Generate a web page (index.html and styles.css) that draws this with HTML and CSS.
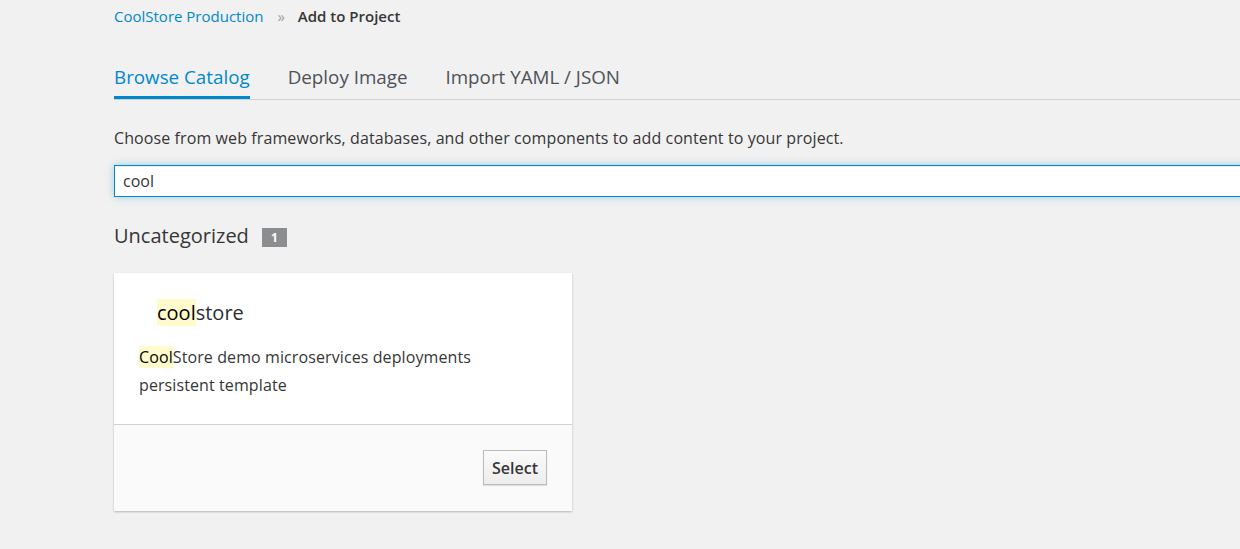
FILE: index.html
```html
<!DOCTYPE html>
<html>
<head>
<meta charset="utf-8">
<link rel="stylesheet" href="styles.css">
</head>
<body>
<div class="page">
  <div class="main">
    <nav class="breadcrumb">
      <a class="crumb-link">CoolStore Production</a>
      <span class="crumb-sep">»</span>
      <span class="crumb-current">Add to Project</span>
    </nav>
    <ul class="tabs">
      <li class="tab active">Browse Catalog</li>
      <li class="tab">Deploy Image</li>
      <li class="tab">Import YAML / JSON</li>
    </ul>
    <p class="intro">Choose from web frameworks, databases, and other components to add content to your project.</p>
    <div class="search"><span class="search-text">cool</span></div>
    <h2 class="category">Uncategorized <span class="badge">1</span></h2>
    <div class="card">
      <div class="card-body">
        <h3 class="card-title"><mark class="hl">cool</mark>store</h3>
        <p class="card-desc"><mark class="hl">Cool</mark>Store demo microservices deployments persistent template</p>
      </div>
      <div class="card-footer">
        <button class="btn">Select</button>
      </div>
    </div>
  </div>
</div>
</body>
</html>
```
FILE: styles.css
```css
html, body {
  margin: 0;
  padding: 0;
  background: #f1f1f1;
  font-family: "Open Sans", "Noto Sans", sans-serif;
  color: #363636;
}
.page {
  overflow: hidden;
  width: 1240px;
  height: 549px;
  padding-left: 114px;
  box-sizing: border-box;
}
.main {
  margin-right: -20px;
}
.breadcrumb {
  display: flex;
  align-items: center;
  height: 32px;
  font-size: 15px;
}
.crumb-link { color: #0088ce; }
.crumb-sep { color: #a0a0a0; margin: 0 13px 0 14px; font-size: 15px; }
.crumb-current { font-weight: 600; color: #363636; }
.tabs {
  list-style: none;
  margin: 27px 0 0 0;
  padding: 0;
  display: flex;
  gap: 38px;
  border-bottom: 1px solid #d1d1d1;
  height: 40px;
}
.tab {
  font-size: 18.8px;
  line-height: 36px;
  color: #4d5258;
  height: 37px;
}
.tab.active {
  color: #0088ce;
  border-bottom: 3px solid #0088ce;
}
.intro {
  margin: 26px 0 0 0;
  font-size: 16px;
  letter-spacing: 0.1px;
  line-height: 24px;
}
.search {
  margin-top: 15px;
  height: 32px;
  box-sizing: border-box;
  border: 1px solid #0088ce;
  background: #fff;
  box-shadow: inset 0 1px 1px rgba(3,3,3,0.075), 0 0 8px rgba(0,136,206,0.35);
  display: flex;
  align-items: center;
  padding-left: 8px;
  font-size: 16px;
}
.category {
  margin: 25px 0 0 0;
  font-size: 20px;
  font-weight: 400;
  line-height: 28px;
  display: flex;
  align-items: center;
}
.badge {
  display: inline-block;
  background: #8b8d8f;
  color: #fff;
  font-size: 12px;
  font-weight: 700;
  width: 25px;
  height: 19px;
  line-height: 19px;
  text-align: center;
  margin-left: 13px;
  margin-top: 2px;
}
.card {
  margin-top: 23px;
  width: 458px;
  background: #fff;
  box-shadow: 0 1px 2px rgba(3,3,3,0.25);
}
.card-body {
  padding: 26px 25px 0 25px;
  height: 152px;
  box-sizing: border-box;
  border-bottom: 1px solid #d1d1d1;
}
.card-title {
  margin: 0 0 0 18px;
  font-size: 20px;
  font-weight: 400;
  line-height: 27px;
  color: #292e34;
}
.hl {
  background: #fffbcc;
  color: #030303;
  padding: 0;
}
.card-desc {
  margin: 17px 0 0 0;
  font-size: 16px;
  letter-spacing: 0.1px;
  line-height: 28px;
  color: #363636;
}
.card-footer {
  background: #fafafa;
  height: 86px;
  display: flex;
  justify-content: flex-end;
  align-items: flex-start;
  padding: 25px 25px 0 0;
  box-sizing: border-box;
}
.btn {
  font-family: "Open Sans", "Noto Sans", sans-serif;
  font-size: 16px;
  font-weight: 600;
  color: #363636;
  background: linear-gradient(#fafafa, #ededed);
  border: 1px solid #bbb;
  box-shadow: 0 1px 1px rgba(3,3,3,0.1);
  height: 35px;
  width: 64px;
  padding: 0;
}
```
